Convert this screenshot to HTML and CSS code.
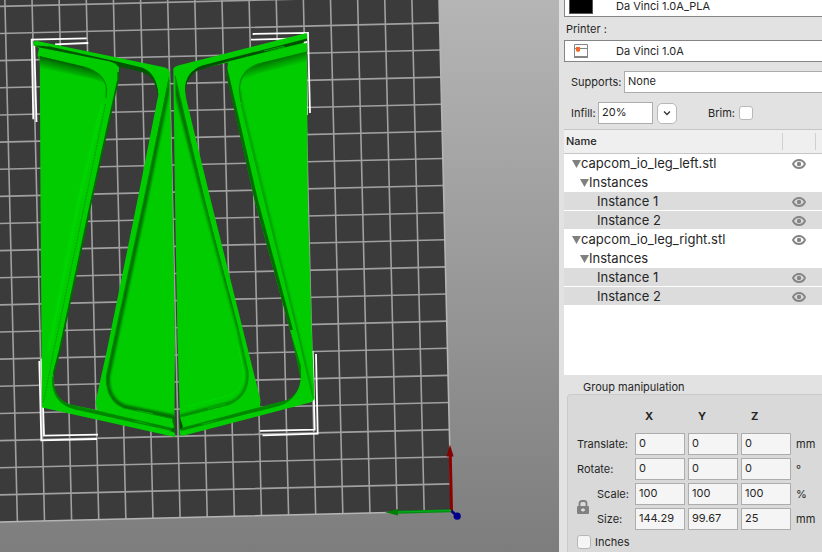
FILE: index.html
```html
<!DOCTYPE html>
<html lang="en">
<head>
<meta charset="utf-8">
<title>Plater</title>
<link rel="stylesheet" href="styles.css">
</head>
<body>
<main class="app">
  <section class="viewport" aria-label="Print bed">
    <svg class="scene" viewBox="0 0 559 552" preserveAspectRatio="xMinYMin slice" role="img" aria-label="Print bed with two pairs of leg panels">
      <defs>
        <linearGradient id="fadeL" gradientUnits="userSpaceOnUse" x1="70" y1="62.500" x2="67" y2="75">
          <stop offset="0" stop-color="#005400"/><stop offset=".3" stop-color="#008000"/><stop offset="1" stop-color="#00cc00"/>
        </linearGradient>
        <linearGradient id="fadeR" gradientUnits="userSpaceOnUse" x1="275" y1="59" x2="278" y2="70">
          <stop offset="0" stop-color="#007000"/><stop offset=".35" stop-color="#009400"/><stop offset="1" stop-color="#00cc00"/>
        </linearGradient>
        <filter id="soft" x="-20%" y="-20%" width="140%" height="140%"><feGaussianBlur stdDeviation="1.300"/></filter>
        <clipPath id="pocketL"><path d="M169 76L144 200L112 350L106.500 376Q105.500 400 124 408L174.500 419L175 340Z"/></clipPath>
        <clipPath id="pocketR"><path d="M175.500 80L205 200L238.500 330L248 371Q250 396 229 405L180 417.500L177.500 340L175 200Z"/></clipPath>
        <clipPath id="capL"><path d="M39.500 57L84 67Q106 74 107 90L105 105L82 200L52 350L43 398L40 200Z"/></clipPath>
        <clipPath id="capR"><path d="M306.500 53L260 63.500Q238 72 239 90L241 102L265 200L297 330L313 397L307.500 200Z"/></clipPath>
      </defs>

      <g transform="matrix(27.12 -.66 .65 27.12 451.300 511)">
        <path fill="#3b3b3b" d="M0 0H-17V-20H0Z"/>
        <path class="grid" d="M-1 0V-20M-2 0V-20M-3 0V-20M-4 0V-20M-5 0V-20M-6 0V-20M-7 0V-20M-8 0V-20M-9 0V-20M-10 0V-20M-11 0V-20M-12 0V-20M-13 0V-20M-14 0V-20M-15 0V-20M-16 0V-20"/>
        <path class="grid" d="M0 -1H-17M0 -2H-17M0 -3H-17M0 -4H-17M0 -5H-17M0 -6H-17M0 -7H-17M0 -8H-17M0 -9H-17M0 -10H-17M0 -11H-17M0 -12H-17M0 -13H-17M0 -14H-17M0 -15H-17M0 -16H-17M0 -17H-17M0 -18H-17M0 -19H-17"/>
        <path class="grid edge" d="M0 -20V0H-17"/>
      </g>

      <path class="bracket" d="M33.300 119.300L31.700 39.700L86.700 38.300M36.500 122L34.300 45.500M55 44.300L88.300 43"/>
      <path class="bracket" d="M252.700 34L308 32.800L310 113M251 39.700L290 38.700M306 53L307 115"/>
      <path class="bracket" d="M39.300 361L41.300 440.300L97 439M41.500 359L44 435.700L98 434.700"/>
      <path class="bracket" d="M316 354L317.700 433.700L262.500 435.300M312.700 351L314.700 429.700L260 430.800"/>

      <!-- left pair -->
      <path fill="#00cc00" fill-rule="evenodd" d="M33.300 42L36 40.700L163 67Q168.500 68 169.800 72L172.500 200L175 340L174.500 418L175 437L42 407.500L40.500 200L39.800 60L37.500 55L39 48L34 45.500Z
        M119 66L139 70.500Q157 74 158.300 95L137.500 200L107 350L95.500 402L97 410L72 405Q54 401 52 380L54 372L60 350L92 200L118.700 78Z"/>
      <path fill="#005800" d="M35 45.500L50 46.500L119 62L142 67.500Q157 73 158.300 95L154 82Q149 73 136 70.500L118 66.500Q116 63 110 61.500L39.500 47.500Z"/>
      <path fill="url(#fadeL)" d="M39.500 56L84 66.500Q104 72 107 90Q100 78 84 77L40 68Z"/>
      <path fill="none" stroke="#008800" stroke-width="1.200" d="M84 67Q105 73 106.500 89L106 98"/>
      <g clip-path="url(#capL)"><path fill="none" stroke="#00dc00" stroke-width="2" filter="url(#soft)" d="M102 105L79 200L49 350"/></g>
      <path fill="none" stroke="#009f00" stroke-width="1" stroke-dasharray="2 1" d="M105.500 104L86 198L54 350L43.500 402"/>
      <path fill="none" stroke="#006d00" stroke-width="1.800" d="M118.300 72V79L91.500 200L59.800 350L53.500 374"/>
      <path fill="#008700" d="M54 371L51.800 381Q53 404 75 409.500L174.500 431.500V428.500L97 410.500L72 405Q54 400 54 380Z"/>
      <path fill="#00a800" d="M133 421L154 426L140 421Z"/>
      <g clip-path="url(#pocketL)">
        <path fill="none" stroke="#007000" stroke-width="9" filter="url(#soft)" d="M168.500 74L143 200L111 350L105.500 376Q104 401 124 409L177 420"/>
      </g>
      <path fill="none" stroke="#008a00" stroke-width="1.200" d="M169 80L144 200L112 350L106.500 376Q105.500 400 124 408L174.500 419"/>
      <path fill="none" stroke="#00b400" stroke-width="1" d="M137 410.500L153 413.500"/>
      <path fill="#006000" opacity=".75" d="M175 416L172 420L174 427L170 431L175 433Z"/>

      <!-- right pair -->
      <path fill="#00cc00" fill-rule="evenodd" d="M173.300 69Q174 66.500 180 65L305.500 33.300H307V53L307.700 200L311.700 330L314.500 399L312 402L182 436L179.500 434L180 418L177.500 340L175 200Z
        M228 62.500L202 68.500Q186 73 185 90L186 98L210.700 200L243 330L260.500 400L260 407L285 401Q300 396 301 376L299 364L290 330L254.500 200L226.700 75Z"/>
      <path fill="#005000" d="M307 38.500V42L232 60.500L202 69Q188 73 185 90Q185 72 202 65.500Z"/>
      <path fill="none" stroke="#00aa00" stroke-width="1" d="M264 51L284 46M267 52L285 47"/>
      <path fill="#fff" d="M304 41.800L307 41V43L303.500 43.500Z"/>
      <path fill="url(#fadeR)" d="M307 51.500L260 63Q239 69 239 91Q244 78 260 73L307 62Z"/>
      <path fill="none" stroke="#009200" stroke-width="1.200" d="M262 63Q239 69 239.500 91L241 102"/>
      <g clip-path="url(#capR)"><path fill="none" stroke="#009400" stroke-width="4" filter="url(#soft)" d="M238.500 90L240 102L264 200L296 330L312 397"/></g>
      <path fill="none" stroke="#009f00" stroke-width="1" d="M241 104L264.500 200L297 330L313 398"/>
      <path fill="#006d00" d="M226.700 67L229 75L258 200L293 330L290 330L254.500 200L226.700 77Z"/>
      <path fill="#008700" d="M290 330L301 366Q302 400 279 406L181 431V428L260 407L284 401Q300 396 300 376Z"/>
      <path fill="#00a800" d="M200 424L220 419L205 425Z"/>
      <g clip-path="url(#pocketR)">
        <path fill="none" stroke="#007000" stroke-width="9" filter="url(#soft)" d="M174 73L207 200"/>
        <path fill="none" stroke="#008600" stroke-width="6" filter="url(#soft)" d="M205 200L240 330L249 371Q251 396 230 404.500L179 418"/>
      </g>
      <path fill="none" stroke="#008800" stroke-width="1.200" d="M175 76L204 200L238.500 330"/>
      <path fill="none" stroke="#009a00" stroke-width="1.200" d="M238.500 330L248 371Q250 396 229 404L180 417"/>
      <path fill="none" stroke="#00d800" stroke-width="1" d="M238 345L243.500 371Q246 388 228 396L186 407"/>
      <path fill="none" stroke="#00b400" stroke-width="1" d="M208 408.500L226 404"/>
      <path fill="#005000" d="M179.500 416L183 427L180 430Z"/>

      <!-- axes -->
      <path stroke="#8c0000" stroke-width="3" d="M451.500 511L450.300 456"/>
      <path fill="#850000" d="M450 444.500L453.600 456.500H446.500Z"/>
      <path stroke="#008c10" stroke-width="3" d="M451 510.800L397 512.300"/>
      <path stroke="#00b020" stroke-width="1" d="M451 510.500L397 512"/>
      <path fill="#007f00" d="M385 512.300L398 509V515.500Z"/>
      <path stroke="#00008a" stroke-width="2.500" d="M451.500 511L457 516"/>
      <circle cx="457.200" cy="516.200" r="3.600" fill="#00008a"/>
    </svg>
  </section>

  <aside class="panel">
    <form class="settings">
      <div class="preset">
        <select aria-label="Filament"><option>Da Vinci 1.0A_PLA</option></select>
        <span class="swatch"></span>
      </div>
      <label class="caption" for="printer">Printer :</label>
      <div class="preset">
        <select id="printer"><option>Da Vinci 1.0A</option></select>
        <svg class="printer-icon" viewBox="0 0 14 14" aria-hidden="true">
          <path fill="#fff" stroke="#858585" d="M.5.500H13.500V13H.5Z"/><path stroke="#858585" d="M0 4.500H14"/><path stroke="#858585" stroke-width="2" d="M0 13H14"/><path fill="#f0692b" d="M2 3H6V7L4 8L2 7Z"/>
        </svg>
      </div>
      <div class="row supports">
        <label for="supports">Supports:</label>
        <select id="supports"><option>None</option></select>
      </div>
      <div class="row infill">
        <label for="infill">Infill:</label>
        <input id="infill" type="text" value="20%">
        <button class="drop" type="button" aria-label="Infill presets"><svg viewBox="0 0 8 6"><path d="M1 1.500L4 4.500L7 1.500"/></svg></button>
        <label class="brim" for="brim">Brim:</label>
        <input id="brim" type="checkbox">
      </div>
    </form>

    <svg class="symbols" aria-hidden="true">
      <symbol id="eye" viewBox="0 0 14 10"><path fill="none" stroke="#858585" stroke-width="1.900" d="M1 5Q3 1 7 1T13 5Q11 9 7 9T1 5Z"/><circle cx="7" cy="5" r="2.200" fill="#858585"/></symbol>
    </svg>

    <div class="objects">
      <table>
        <thead><tr><th>Name</th><th class="eye-col"></th><th class="end-col"></th></tr></thead>
        <tbody>
          <tr><td class="object"><button class="fold" aria-label="Collapse"></button>capcom_io_leg_left.stl</td><td><button class="eye" aria-label="Visible"><svg><use href="#eye"/></svg></button></td><td></td></tr>
          <tr><td class="group"><button class="fold" aria-label="Collapse"></button>Instances</td><td></td><td></td></tr>
          <tr class="selected"><td class="instance">Instance 1</td><td><button class="eye" aria-label="Visible"><svg><use href="#eye"/></svg></button></td><td></td></tr>
          <tr class="selected"><td class="instance">Instance 2</td><td><button class="eye" aria-label="Visible"><svg><use href="#eye"/></svg></button></td><td></td></tr>
          <tr><td class="object"><button class="fold" aria-label="Collapse"></button>capcom_io_leg_right.stl</td><td><button class="eye" aria-label="Visible"><svg><use href="#eye"/></svg></button></td><td></td></tr>
          <tr><td class="group"><button class="fold" aria-label="Collapse"></button>Instances</td><td></td><td></td></tr>
          <tr class="selected"><td class="instance">Instance 1</td><td><button class="eye" aria-label="Visible"><svg><use href="#eye"/></svg></button></td><td></td></tr>
          <tr class="selected"><td class="instance">Instance 2</td><td><button class="eye" aria-label="Visible"><svg><use href="#eye"/></svg></button></td><td></td></tr>
        </tbody>
      </table>
    </div>

    <h2 class="title">Group manipulation</h2>
    <form class="manipulation">
      <div class="fields">
        <b class="axis x">X</b><b class="axis">Y</b><b class="axis">Z</b>
        <label class="wide" for="tx">Translate:</label>
        <input id="tx" type="text" value="0"><input aria-label="Translate Y" type="text" value="0"><input aria-label="Translate Z" type="text" value="0"><span>mm</span>
        <label class="wide" for="rx">Rotate:</label>
        <input id="rx" type="text" value="0"><input aria-label="Rotate Y" type="text" value="0"><input aria-label="Rotate Z" type="text" value="0"><span>°</span>
        <button class="lock" type="button" aria-label="Lock proportions"><svg viewBox="0 0 12 14"><path fill="none" stroke="#808080" stroke-width="1.800" d="M2.500 7V3.500Q2.500 1 5 1H7Q9.500 1 9.500 3.500V7"/><rect y="6" width="12" height="8" rx="1" fill="#808080"/><path stroke="#e6e6e6" stroke-width="1.500" d="M4 10H8M6 8.500V11.500"/></svg></button>
        <label for="sx">Scale:</label>
        <input id="sx" type="text" value="100"><input aria-label="Scale Y" type="text" value="100"><input aria-label="Scale Z" type="text" value="100"><span>%</span>
        <label for="zx">Size:</label>
        <input id="zx" type="text" value="144.29"><input aria-label="Size Y" type="text" value="99.67"><input aria-label="Size Z" type="text" value="25"><span>mm</span>
      </div>
      <label class="inches"><input type="checkbox">Inches</label>
    </form>
  </aside>
</main>
</body>
</html>
```
FILE: styles.css
```css
* { box-sizing: border-box; }

body {
  margin: 0;
  overflow: hidden;
  background: #e2e2e2;
  color: #262626;
  font: 11px/14px Inter, "Liberation Sans", sans-serif;
}

button, input, select { font: inherit; color: inherit; margin: 0; }
button { padding: 0; border: 0; background: none; }

.app { display: flex; height: 100vh; }

.viewport {
  flex: 1;
  min-width: 0;
  background: linear-gradient(#b5b5b5, #7d7d7d);
}
.scene { display: block; width: 100%; height: 100%; }
.grid { fill: none; stroke: #a0a0a0; stroke-width: 1.6px; vector-effect: non-scaling-stroke; }
.edge { stroke: #b4b4b4; }
.bracket { fill: none; stroke: #fff; stroke-width: 1.8px; }

.panel {
  flex: 0 0 263px;
  display: flex;
  flex-direction: column;
  padding-left: 5px;
  overflow: hidden;
}

.settings { margin-top: -5px; }
.preset { position: relative; }
select, input[type="text"] {
  appearance: none;
  width: 100%;
  height: 22px;
  padding: 0 3px 2px;
  border: 1px solid #adadad;
  border-radius: 0;
  background: #fff;
  outline: 0;
}
.preset select {
  display: block;
  padding: 0 0 0 51px;
  border-color: #858585;
  border-right: 0;
}
.swatch {
  position: absolute;
  top: 2px;
  left: 5px;
  width: 24px;
  height: 17px;
  border: 1px solid #555;
  background: #000;
}
.printer-icon { position: absolute; top: 4px; left: 10px; width: 14px; height: 14px; }
.caption { display: block; padding: 5px 2px 4px; }

.row { display: flex; align-items: center; padding-left: 7px; }
.supports { margin-top: 9px; }
.supports label { flex: 0 0 53px; }
.supports select { border-right: 0; }
.infill { margin-top: 9px; }
.infill label { flex: 0 0 27px; }
.infill input[type="text"] { flex: 0 0 55px; }
.infill .brim { flex: 0 0 31px; margin-left: 31px; }
.drop {
  display: flex;
  justify-content: center;
  align-items: center;
  width: 20px;
  height: 21px;
  margin-left: 4px;
  border: 1px solid #b8b8b8;
  border-radius: 5px;
  background: #fff;
}
.drop svg { width: 8px; height: 6px; fill: none; stroke: #333; stroke-width: 1.3px; }
input[type="checkbox"] {
  appearance: none;
  width: 14px;
  height: 14px;
  border: 1px solid #b8b8b8;
  border-radius: 3px;
  background: #fff;
}

.symbols { position: absolute; width: 0; height: 0; }
.objects {
  height: 246px;
  margin-top: 5px;
  border-top: 1px solid #c6c6c6;
  background: #fff;
}
table { width: 100%; border-collapse: separate; border-spacing: 0; table-layout: fixed; font-size: 13px; }
th {
  position: relative;
  height: 24px;
  padding: 0 2px 1px;
  border-bottom: 1px solid #c6c6c6;
  background: #efefef;
  font-size: 11px;
  font-weight: 500;
  text-align: left;
}
.eye-col { width: 33px; }
.end-col { width: 7px; }
.eye-col::before, .end-col::before {
  content: "";
  position: absolute;
  top: 3px;
  left: 0;
  height: 17px;
  border-left: 1px solid #d0d0d0;
}
td { height: 19px; padding: 0; line-height: 19px; white-space: nowrap; }
.object { padding-left: 8px; }
.group { padding-left: 16px; }
.instance { padding-left: 33px; }
.selected td { background: linear-gradient(#dcdcdc 18px, #fff 18px); }
.fold {
  width: 9px;
  height: 8px;
  background: #808080;
  clip-path: polygon(0 0, 100% 0, 50% 100%);
}
.eye { display: block; width: 14px; height: 10px; margin-left: 10px; }
.eye svg { display: block; width: 14px; height: 10px; }

.title { margin: 5px 0 0 19px; font: inherit; }
.manipulation {
  flex: 1;
  margin: 0 -4px 0 3px;
  padding: 13px 9px 0;
  border: 1px solid #cacaca;
  border-bottom: 0;
  border-radius: 4px 4px 0 0;
  background: #d9d9d9;
}
.fields {
  display: grid;
  grid-template-columns: 17px 35px 50px 50px 50px 1fr;
  grid-template-rows: 22px repeat(4, 22px);
  gap: 3px;
  align-items: center;
}
.fields span { padding-left: 2px; }
.fields input { background: #f5f5f5; }
.wide { grid-column: 1 / 3; }
.axis { padding-left: 10px; line-height: 16px; align-self: start; }
.axis.x { grid-column: 3; }
.lock { grid-row: 4 / 6; align-self: center; width: 12px; height: 14px; }
.lock svg { display: block; width: 12px; height: 14px; }
.inches { display: flex; align-items: center; gap: 4px; margin-top: 5px; }
.inches input { background: #f5f5f5; }
```
